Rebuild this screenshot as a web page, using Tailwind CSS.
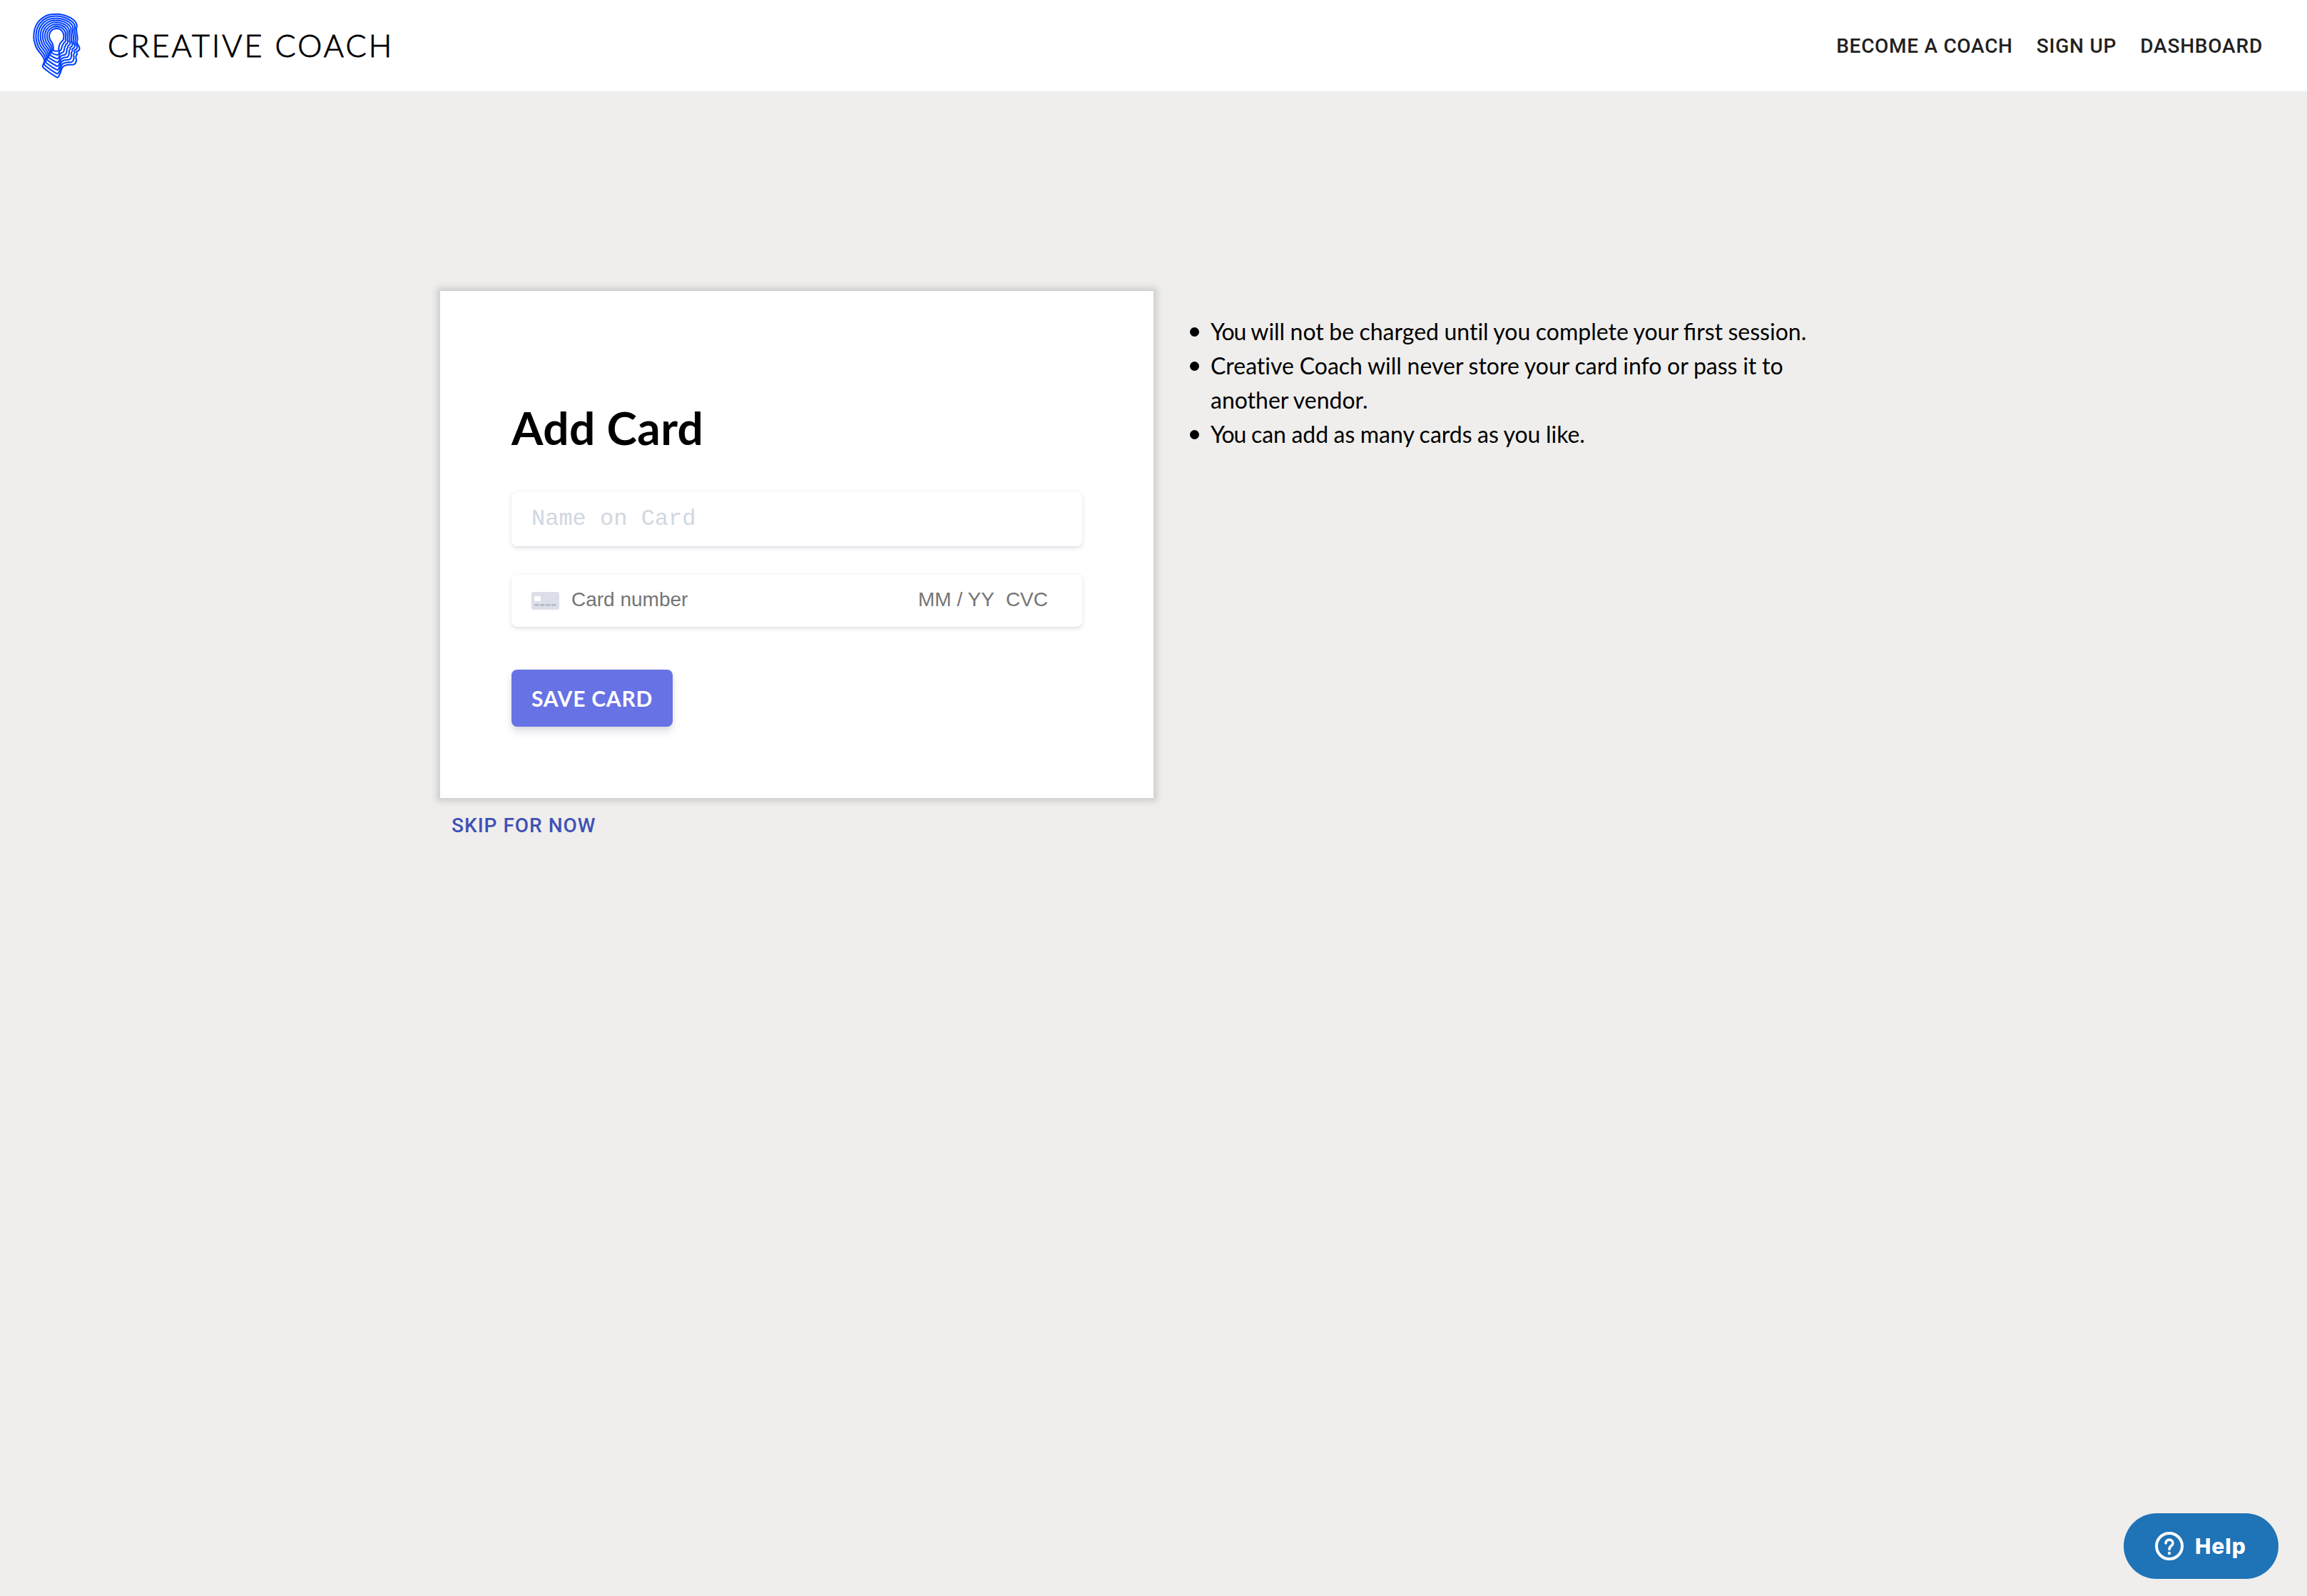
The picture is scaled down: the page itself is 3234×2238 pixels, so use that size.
<!DOCTYPE html>
<html lang="en">
<head>
<meta charset="utf-8">
<title>Creative Coach</title>
<script src="https://cdn.jsdelivr.net/npm/@tailwindcss/browser@4"></script>
</head>
<body class="min-h-screen bg-[#efeeec] text-black font-['Lato',sans-serif] overflow-hidden">
<header class="h-32 bg-white flex items-center justify-between pl-10 pr-[62px]">
  <a class="flex items-center">
    <svg id="logo" class="w-[80px] h-[110px] shrink-0" viewBox="30 -3 240 330" fill="none" stroke="#0040ff" stroke-width="6.2" stroke-linejoin="round"></svg>
    <span class="ml-[31px] -mt-px text-[43px] leading-none font-light [-webkit-text-stroke:0.9px_#000] tracking-[3.15px] whitespace-nowrap">CREATIVE COACH</span>
  </a>
  <nav class="flex gap-[33px] pt-px font-['Roboto',sans-serif] font-medium text-[28px] leading-[49px] tracking-[0.8px] text-[#212121]">
    <a class="tracking-[0.7px]">BECOME A COACH</a><a>SIGN UP</a><a>DASHBOARD</a>
  </nav>
</header>
<main class="w-[2000px] mx-auto pt-[280px] flex items-start">
  <div class="w-[1000px]">
    <form class="h-[711px] bg-white shadow-[0_0_8px_5px_#cfcfcf] px-[100px] pt-[153px]">
      <h1 class="text-[64px] leading-[77px] font-bold tracking-[0.4px]">Add Card</h1>
      <div class="mt-[52px] h-[76px] rounded-lg bg-white shadow-[0_2px_6px_rgba(50,50,93,0.15),0_2px_0_rgba(0,0,0,0.02)] px-7 pt-[8px] text-[32px] leading-[60px] text-[#cfd7df] font-['Liberation_Mono',monospace] whitespace-pre">Name on Card</div>
      <div class="mt-10 h-[73px] rounded-lg bg-white shadow-[0_2px_6px_rgba(50,50,93,0.15),0_2px_0_rgba(0,0,0,0.02)] pl-7 pr-[48px] pb-1 flex items-center text-[28px] leading-[34px] text-[#757575] font-['Liberation_Sans',sans-serif]">
        <svg class="w-[39px] h-[25px] mt-1 mr-[17px]" viewBox="0 0 39 25">
          <rect width="39" height="25" rx="3" fill="#dcdfe7"/>
          <rect x="4" y="6" width="9" height="7" rx="1" fill="#fff"/>
          <path d="M5.300 18.300h4.200M13.300 18.300h4.200M21.300 18.300h4.200M29.300 18.300h4.200" stroke="#b2b9ca" stroke-width="2.700" stroke-linecap="round"/>
        </svg>
        <span>Card number</span>
        <span class="ml-auto">MM / YY</span>
        <span class="ml-4">CVC</span>
      </div>
      <button type="button" class="mt-[60px] block w-[226px] h-20 rounded-lg bg-[#6772e5] text-white text-[30px] font-bold tracking-[0.75px] whitespace-nowrap shadow-[0_8px_12px_rgba(50,50,93,0.11),0_2px_6px_rgba(0,0,0,0.08)]">SAVE CARD</button>
    </form>
    <a class="block mt-[14px] ml-4 font-['Roboto',sans-serif] font-medium text-[28px] leading-[49px] tracking-[1px] text-[#3f51b5]">SKIP FOR NOW</a>
  </div>
  <ul class="w-[1000px] pt-[33px] pl-[51px] text-[32px] leading-[48px] [word-spacing:-0.75px]">
    <li class="flex"><span class="w-[13px] h-[13px] mt-[18px] mr-[16px] rounded-full bg-black shrink-0"></span><span><span class="tracking-[-1px]">You</span> will not be charged <span class="[font-variant-ligatures:none]">until</span> you complete your first session.</span></li>
    <li class="flex [word-spacing:-0.5px]"><span class="w-[13px] h-[13px] mt-[18px] mr-[16px] rounded-full bg-black shrink-0"></span><span><span class="[font-variant-ligatures:none]">Creative</span> Coach will never store your card info or pass it to<br>another vendor.</span></li>
    <li class="flex"><span class="w-[13px] h-[13px] mt-[18px] mr-[16px] rounded-full bg-black shrink-0"></span><span><span class="tracking-[-1px]">You</span> can add as many cards as you like.</span></li>
  </ul>
</main>
<button type="button" class="fixed right-10 bottom-6 w-[217px] h-[92px] rounded-full bg-[#1f73b7] text-white flex items-center pl-11 font-['Inter',sans-serif] font-extrabold text-[30px] tracking-[0.9px]">
  <svg class="w-10 h-10 mr-4" viewBox="0 0 40 40" fill="none" stroke="#fff" stroke-width="4" stroke-linecap="round">
    <circle cx="20" cy="20" r="18"/>
    <path d="M15 16C15 9.500 25 9.500 25 16C25 20 20 19.500 20 24.500" stroke-width="3.600"/>
    <circle cx="20" cy="30" r="2.200" fill="#fff" stroke="none"/>
  </svg>Help
</button>
<script>
  // Logo: eight nested outlines blending a light bulb into a head in profile
  const head = [[148,29],[186,36],[220,54],[233,75],[231,95],[236,130],[234,150],[244,170],[242,181],[232,188],[234,198],[229,208],[231,226],[221,241],[192,243],[173,252],[164,276],[155,293],[145,293],[96,258],[90,247],[97,225],[88,205],[62,168],[52,120],[66,69],[105,36]];
  const bulb = [[148,90],[162,93],[171,101],[176,109],[178,118],[178,126],[177,132],[176,137],[173,141],[169,145],[166,149],[163,153],[161,157],[159,162],[158,168],[157,173],[157,177],[157,181],[155,184],[148,185],[137,184],[134,181],[134,168],[130,152],[121,138],[117,120],[122,104],[134,93]].filter((_, i) => i !== 12);
  const curve = p => {
    const n = p.length, f = v => v.toFixed(1);
    let d = `M${p[0]}`;
    for (let i = 0; i < n; i++) {
      const a = p[(i + n - 1) % n], b = p[i], c = p[(i + 1) % n], e = p[(i + 2) % n];
      d += `C${f(b[0] + (c[0] - a[0]) / 6)} ${f(b[1] + (c[1] - a[1]) / 6)} ${f(c[0] - (e[0] - b[0]) / 6)} ${f(c[1] - (e[1] - b[1]) / 6)} ${f(c[0])} ${f(c[1])}`;
    }
    return d + 'Z';
  };
  let paths = '';
  for (let k = 0; k < 8; k++) {
    const t = k / 7;
    paths += `<path d="${curve(head.map((h, i) => [bulb[i][0] + (h[0] - bulb[i][0]) * t, bulb[i][1] + (h[1] - bulb[i][1]) * t]))}"/>`;
  }
  document.getElementById('logo').innerHTML = paths;
</script>
</body>
</html>
